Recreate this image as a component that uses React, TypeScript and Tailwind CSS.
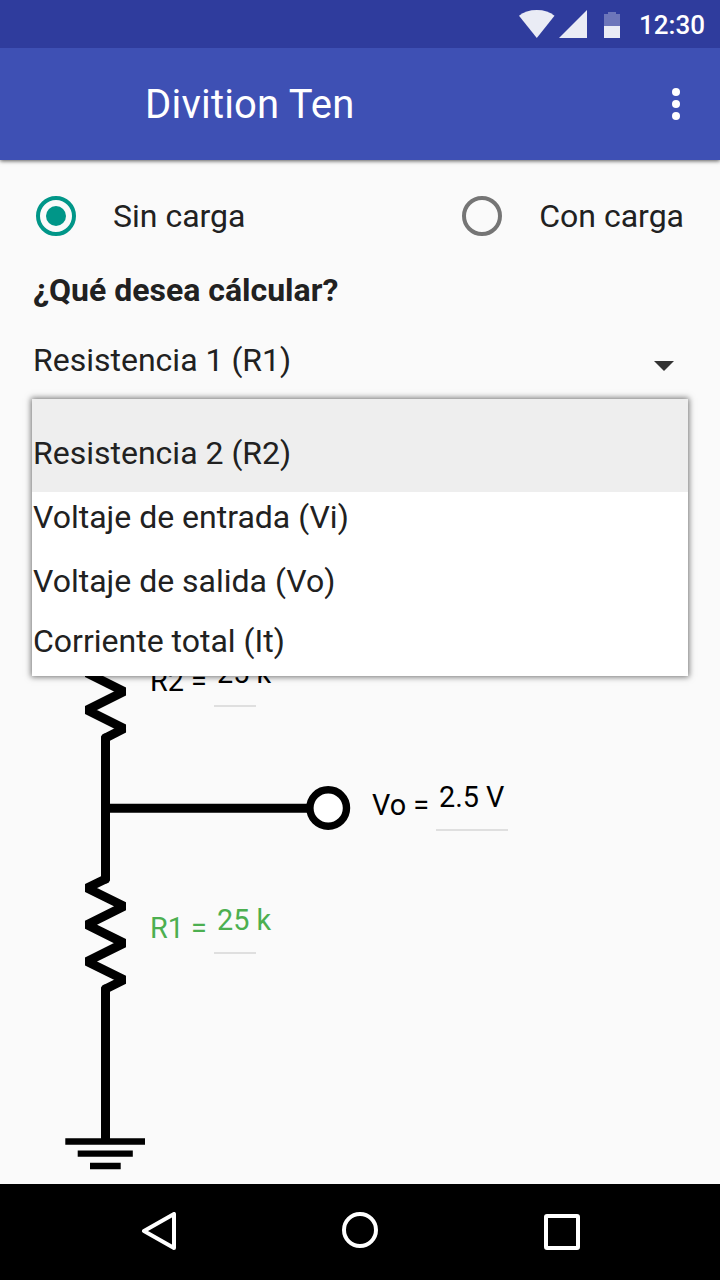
import React from "react";

const menuItems = [
  { label: "Resistencia 2 (R2)", className: "h-[93px] bg-[#eeeeee] pt-[14px]" },
  { label: "Voltaje de entrada (Vi)", className: "h-[64px] pb-[15px]" },
  { label: "Voltaje de salida (Vo)", className: "h-[64px] pb-[15px]" },
  { label: "Corriente total (It)", className: "h-[56px] pb-[15px]" },
];

function StatusBar() {
  return (
    <div className="relative z-20 flex h-12 items-center justify-end bg-[#2f3c9d] pr-[15px] text-white">
      <svg width="104" height="48" viewBox="518 0 104 48" fill="#fff" fillOpacity="0.9">
        <path d="M536.8 38 519 15.8C523.5 12 529.500 10 536.800 10S550 12 554.500 15.800Z" />
        <path d="M587 10V38H559Z" />
        <path d="M608 12h8v2h4v12h-16V14h4Z" fillOpacity="0.3" />
        <path d="M604 26h16v12h-16Z" />
      </svg>
      <span className="ml-[17px] w-[66px] whitespace-nowrap pt-[2px] text-[26px] font-medium leading-[32px]">12:30</span>
    </div>
  );
}

function AppBar() {
  return (
    <header className="relative z-10 flex h-28 items-center justify-between bg-[#3e50b4] pl-[145px] pr-10 text-white shadow-[0_1px_4px_rgba(0,0,0,0.65)]">
      <h1 className="pt-[2px] text-[40px] leading-[48px] tracking-[0.2px]">Divition Ten</h1>
      <svg width="8" height="32" viewBox="0 0 8 32" fill="#fff">
        <circle cx="4" cy="4" r="4" />
        <circle cx="4" cy="16" r="4" />
        <circle cx="4" cy="28" r="4" />
      </svg>
    </header>
  );
}

function Radio({ label, checked }: { label: string; checked?: boolean }) {
  return (
    <label className="flex items-center gap-[37px]">
      <span
        className={
          checked
            ? "flex size-10 items-center justify-center rounded-full border-4 border-[#009688]"
            : "flex size-10 items-center justify-center rounded-full border-4 border-[#757575]"
        }
      >
        {checked && <span className="size-5 rounded-full bg-[#009688]" />}
      </span>
      <span>{label}</span>
    </label>
  );
}

function Circuit() {
  return (
    <div className="relative h-[784px]">
      <svg className="block" width="720" height="784" viewBox="0 400 720 784" fill="none" stroke="#000" strokeWidth="9">
        <path d="M105.500 628 87 636.500 124 654.500 87 673 124 691.500 87 710 124 728.500 105.500 738" strokeLinejoin="bevel" strokeLinecap="round" />
        <path d="M105.500 738V879" strokeLinecap="round" />
        <path d="M105.500 808.200H310" />
        <circle cx="328.200" cy="808" r="18.300" fill="#fff" strokeWidth="7.400" />
        <path d="M105.500 879 87 888 124 906.300 87 924.800 124 943.100 87 961.500 124 979.700 105.500 989" strokeLinejoin="bevel" strokeLinecap="round" />
        <path d="M105.500 1000V989" strokeLinecap="round" />
        <path d="M105.500 999V1140" />
        <path d="M65.300 1141.500H145M77.700 1153.700H132.800M90 1166H120.700" strokeWidth="6.300" />
      </svg>
      <div className="absolute left-[150px] top-[265px] text-[28.8px] leading-8 text-black">R2 =</div>
      <div className="absolute left-[214px] top-[257px] h-[50px] w-[42px] whitespace-nowrap border-b-2 border-[#dfdfdf] pl-[3px] text-[28.8px] leading-8 text-black">25 k</div>
      <div className="absolute left-[372px] top-[389px] text-[28.8px] leading-8 text-black">Vo =</div>
      <div className="absolute left-[436px] top-[381px] h-[50px] w-[72px] whitespace-nowrap border-b-2 border-[#dfdfdf] pl-[3px] text-[28.8px] leading-8 text-black">2.5 V</div>
      <div className="absolute left-[150px] top-[512px] text-[28.8px] leading-8 text-[#4caf50]">R1 =</div>
      <div className="absolute left-[214px] top-[504px] h-[50px] w-[42px] whitespace-nowrap border-b-2 border-[#dfdfdf] pl-[3px] text-[28.8px] leading-8 text-[#4caf50]">25 k</div>
    </div>
  );
}

export default function App() {
  return (
    <div className="flex h-[1280px] w-[720px] flex-col overflow-hidden bg-[#fafafa] font-['Roboto',sans-serif] text-[#212121]">
      <StatusBar />
      <AppBar />
      <main className="relative h-[1024px] text-[32px] leading-[40px]">
        <div className="flex h-[110px] items-center justify-between px-9 pt-[2px]">
          <Radio label="Sin carga" checked />
          <Radio label="Con carga" />
        </div>
        <h2 className="h-[70px] pl-[33px] font-bold">¿Qué desea cálcular?</h2>
        <div className="flex h-[60px] items-start justify-between pl-[33px] pr-[46px]">
          <span>Resistencia 1 (R1)</span>
          <svg className="mt-[21px]" width="20" height="10" viewBox="0 0 20 10" fill="#333">
            <path d="M0 0H20L10 10Z" />
          </svg>
        </div>
        <Circuit />
        <ul className="absolute left-8 top-[239px] w-[656px] bg-white shadow-[0_0_6px_1px_rgba(0,0,0,0.55)]">
          {menuItems.map((item) => (
            <li key={item.label} className={`flex items-center pl-px ${item.className}`}>
              {item.label}
            </li>
          ))}
        </ul>
      </main>
      <nav className="flex h-24 items-center justify-between bg-black pl-[140px] pr-[138px]">
        <svg width="40" height="40" viewBox="0 0 40 40" fill="none" stroke="#fff" strokeWidth="4" strokeLinejoin="round">
          <path d="M4 19 34 2V36Z" />
        </svg>
        <svg width="40" height="40" viewBox="0 0 40 40" fill="none" stroke="#fff" strokeWidth="4">
          <circle cx="19" cy="18" r="16" />
        </svg>
        <svg width="40" height="40" viewBox="0 0 40 40" fill="none" stroke="#fff" strokeWidth="4">
          <rect x="4" y="4" width="32" height="32" rx="1" />
        </svg>
      </nav>
    </div>
  );
}
